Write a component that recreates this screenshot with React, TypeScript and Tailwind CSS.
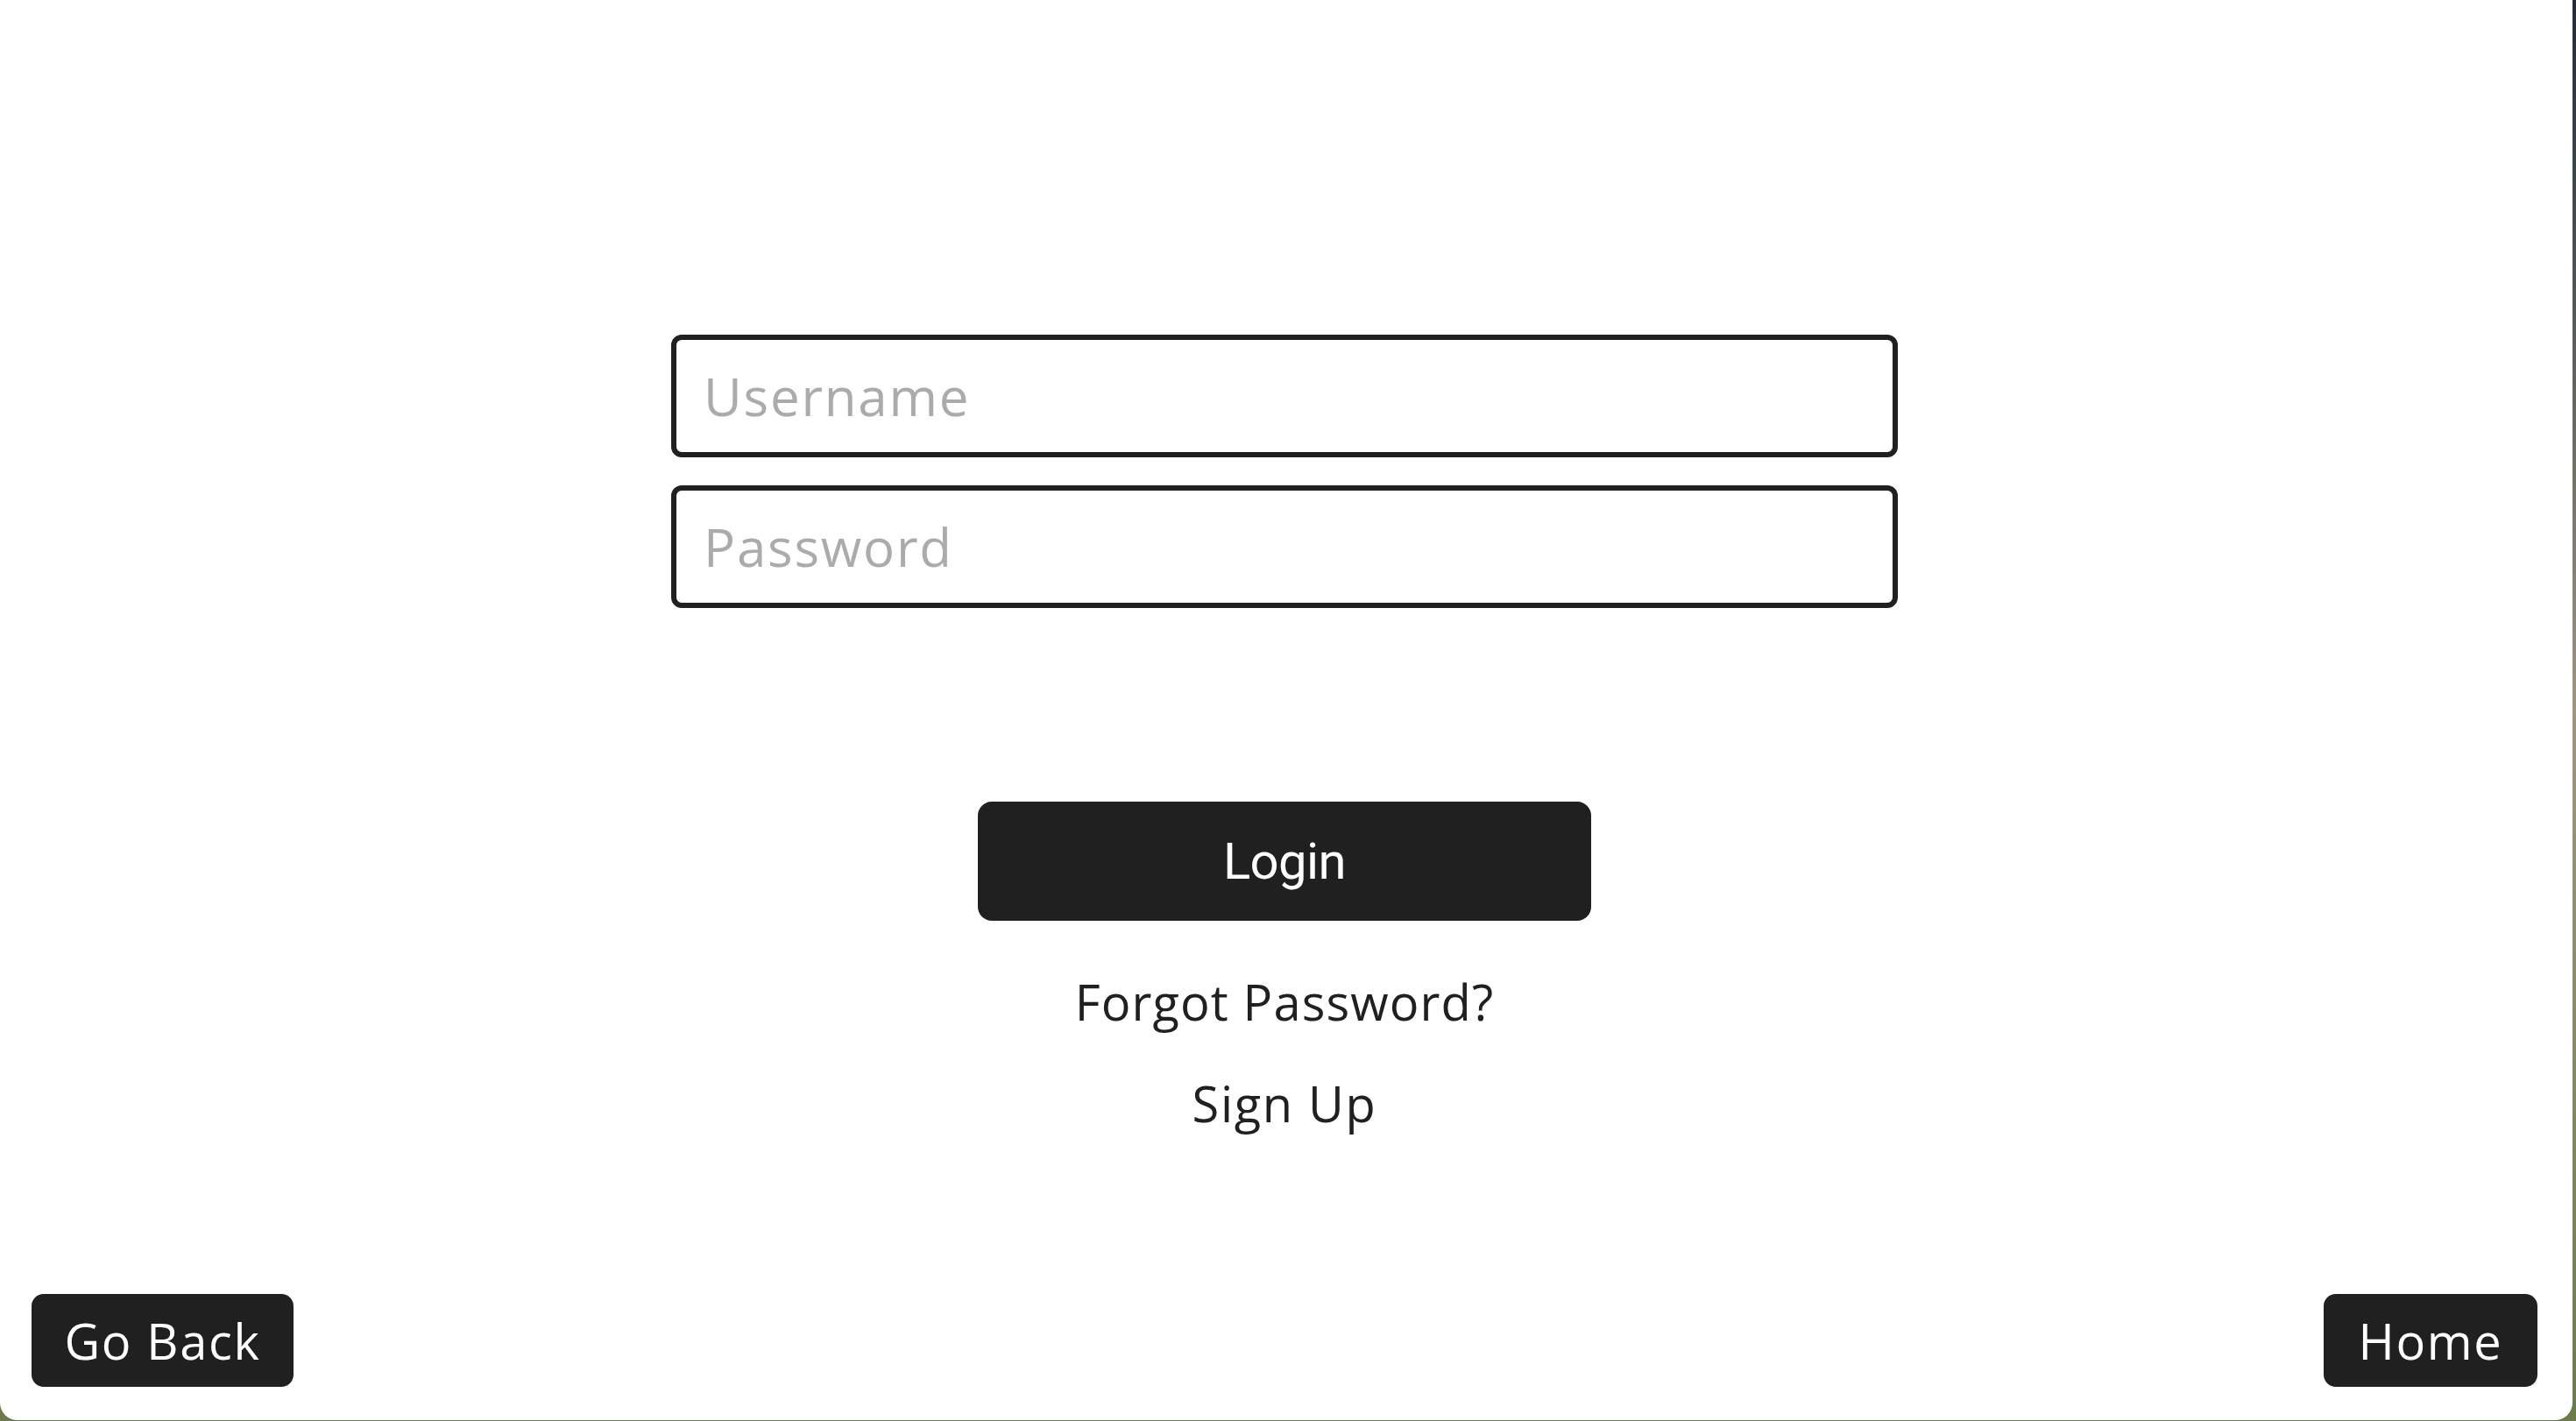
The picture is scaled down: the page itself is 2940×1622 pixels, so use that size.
import React from 'react';

const App: React.FC = () => {
  return (
    <div className="h-screen w-full overflow-hidden bg-linear-to-b from-[#1f2d3a] via-[#a0967e] to-[#6b7b4c]">
      <div className="flex h-[1621px] w-[2936px] flex-col rounded-b-[20px] bg-white pr-1 font-['Open_Sans',sans-serif] text-[#202020]">
        <main className="flex flex-1 flex-col items-center pt-[382px]">
          <form className="flex w-[1400px] flex-col gap-[32px]" onSubmit={(e) => e.preventDefault()}>
            <input
              type="text"
              placeholder="Username"
              className="h-[140px] w-full rounded-[12px] border-[6px] border-[#202020] bg-white pl-[31px] text-[60px] tracking-[0.03em] outline-none placeholder:text-[#ababab]"
            />
            <input
              type="password"
              placeholder="Password"
              className="h-[140px] w-full rounded-[12px] border-[6px] border-[#202020] bg-white pl-[31px] text-[60px] tracking-[0.03em] outline-none placeholder:text-[#ababab]"
            />
          </form>

          <button className="mt-[221px] h-[136px] w-[700px] rounded-[16px] bg-[#202020] font-['Roboto',sans-serif] text-[58px] tracking-[-0.01em] text-white">
            Login
          </button>

          <a className="mt-[54px] cursor-pointer text-[56px] leading-[76px] tracking-[0.02em]">Forgot Password?</a>
          <a className="mt-[40px] cursor-pointer text-[56px] leading-[76px] tracking-[0.03em]">Sign Up</a>
        </main>

        <footer className="flex items-end justify-between px-[36px] pb-[38px]">
          <button className="flex h-[106px] w-[299px] items-center justify-center rounded-[14px] bg-[#202020] text-[56px] tracking-[0.03em] text-white">
            Go Back
          </button>
          <button className="flex h-[106px] w-[244px] items-center justify-center rounded-[14px] bg-[#202020] text-[56px] tracking-[0.03em] text-white">
            Home
          </button>
        </footer>
      </div>
    </div>
  );
};

export default App;
